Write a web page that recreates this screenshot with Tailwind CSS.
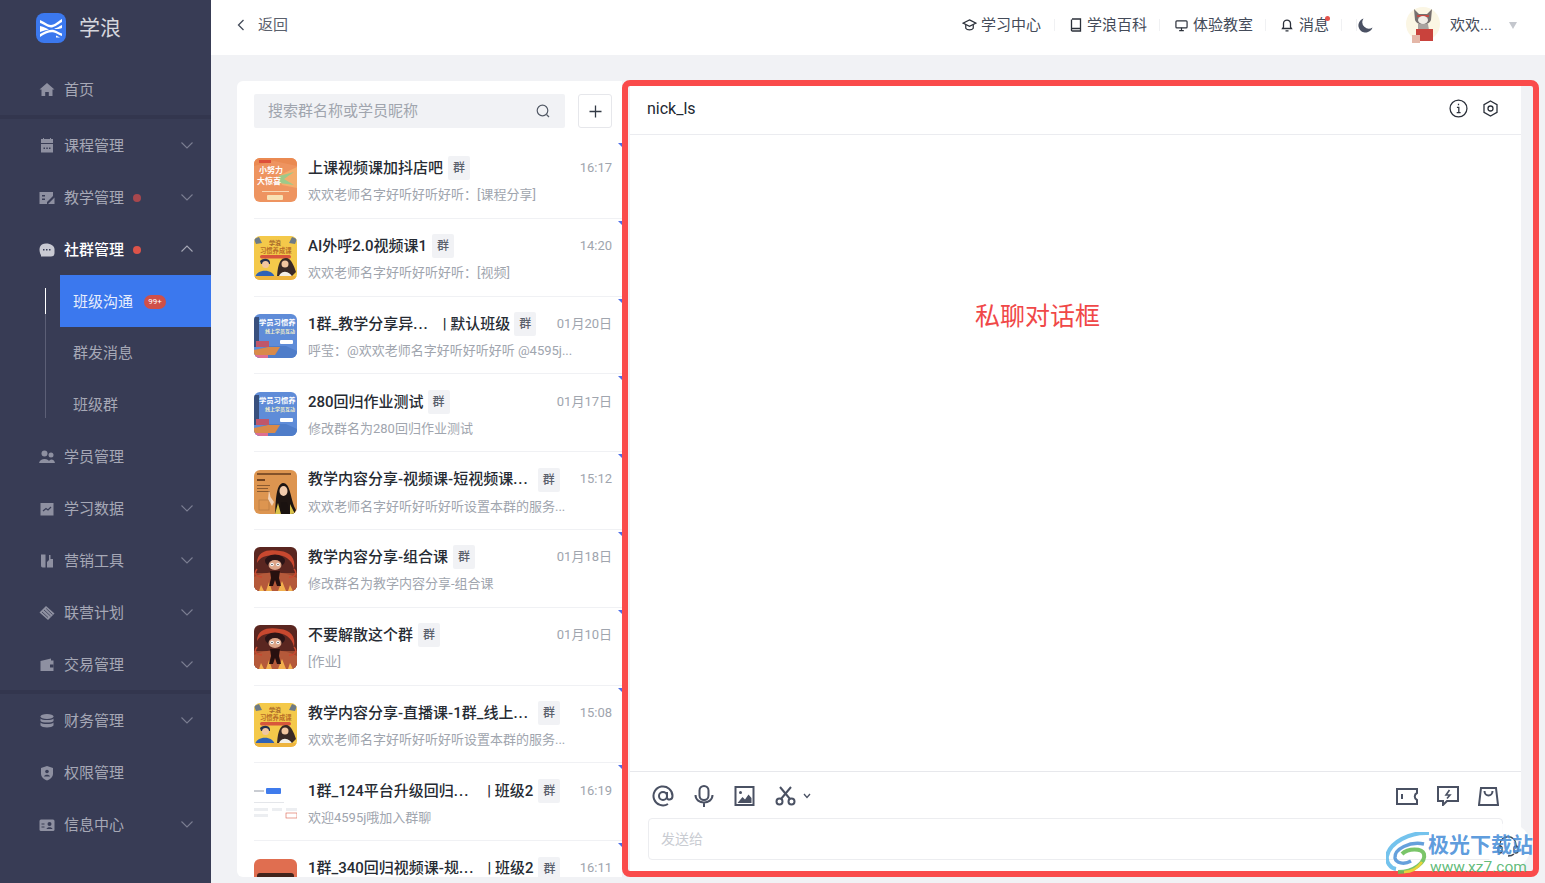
<!DOCTYPE html>
<html lang="zh-CN">

<head>
    <meta charset="UTF-8">
    <title>学浪</title>
    <script src="https://cdn.jsdelivr.net/npm/@tailwindcss/browser@4"></script>
</head>

<body class="h-[883px] w-[1545px] overflow-hidden bg-[#f1f2f5] font-['Roboto','Noto_Sans_CJK_SC',sans-serif]">

    <!-- avatar pictures, reused by several rows -->
    <svg class="hidden">
        <symbol id="av-orange" viewBox="0 0 43 44">
            <rect width="43" height="44" fill="#ee9460" />
            <path d="M0 0 H43 V8 L20 3 L0 8 Z" fill="#ea8a52" />
            <path d="M24 18 L43 9 V30 L28 27 Z" fill="#f4ad6c" />
            <path d="M25 18 L40 14 L30 21 L40 27 L25 25 Z" fill="#9dc98a" />
            <rect x="5" y="2" width="12" height="3" fill="#dd4f3a" />
            <text x="5" y="15" font-size="8" font-weight="700" fill="#fff">小努力</text>
            <text x="3" y="26" font-size="8" font-weight="700" fill="#fff">大惊喜</text>
            <rect x="8" y="33" width="27" height="1" fill="#f8d8b4" />
            <rect x="13" y="37" width="16" height="5" rx="1" fill="#f8e2b4" />
        </symbol>
        <symbol id="av-yellow" viewBox="0 0 43 44">
            <rect width="43" height="44" fill="#f4c94a" />
            <path d="M0 3 L5 1 L8 7 L2 8 Z M43 3 L38 1 L35 7 L41 8 Z" fill="#6d7a86" />
            <text x="15" y="9" font-size="6" font-weight="700" fill="#a8682a">学浪</text>
            <text x="6" y="17" font-size="6.300" font-weight="700" fill="#b86d28">习惯养成课</text>
            <rect x="6" y="19" width="31" height="3.500" rx="1.700" fill="#d8563c" />
            <path d="M6 25 C9 22 15 22 16 26 V28 H7 Z" fill="#26314e" />
            <circle cx="11.500" cy="28.500" r="3.500" fill="#f2c6a0" />
            <path d="M1 42 C2 33 19 32 21 42 Z" fill="#2f62b5" />
            <path d="M23 40 C24 26 27 22 32 22 C37 22 40 30 42 36 L38 40 Z" fill="#3a2a26" />
            <circle cx="31" cy="28" r="3.500" fill="#f2c6a0" />
            <path d="M24 44 C25 33 36 33 40 44 Z" fill="#f3efe6" />
            <rect y="40" width="43" height="4" fill="#eeb43e" />
        </symbol>
        <symbol id="av-blue" viewBox="0 0 43 44">
            <rect width="43" height="44" fill="#5f8cd8" />
            <text x="5" y="11" font-size="7.300" font-weight="700" fill="#fff">学员习惯养</text>
            <text x="11" y="19" font-size="5" font-weight="700" fill="#f5f0c8">线上学员互动</text>
            <rect x="26" y="26" width="13" height="4" rx="1" fill="#fff" />
            <path d="M0 3 H5 V33 H0 Z" fill="#38507e" />
            <path d="M0 37 L14 32 H32 L43 37 V44 H0 Z" fill="#4f7dc9" />
            <path d="M0 36 L14 33 H26 L21 41 H0 Z" fill="#d98a4a" />
            <rect x="2" y="27" width="13" height="6" fill="#c0566a" />
            <rect y="41" width="14" height="3" fill="#de6f92" />
        </symbol>
        <symbol id="av-woman" viewBox="0 0 43 44">
            <rect width="43" height="44" fill="#dd9550" />
            <rect x="3" y="3" width="34" height="2" fill="#84522a" />
            <rect x="3" y="9" width="8" height="2" fill="#70421f" />
            <rect x="3" y="15" width="13" height="1" fill="#8a5a30" />
            <rect x="3" y="18" width="11" height="1" fill="#8a5a30" />
            <rect x="3" y="21" width="13" height="1" fill="#8a5a30" />
            <rect x="5" y="30" width="10" height="10" fill="none" stroke="#b57a42" stroke-width=".7" />
            <path d="M15 20 L16.500 27 L20 32 L18 36 L14 29 Z" fill="#f3d3b8" />
            <path d="M21 44 C22 30 22 14 29 13 C37 13 36 30 42 40 L40 44 Z" fill="#1e1512" />
            <ellipse cx="29.500" cy="21" rx="4" ry="5" fill="#f2cbac" />
            <path d="M26 44 L27 32 L33 32 L36 44 Z" fill="#1a1210" />
            <path d="M21 44 L24 33 L27 44 Z M36 44 L36 34 L41 44 Z" fill="#d9c24a" />
        </symbol>
        <symbol id="av-fire" viewBox="0 0 43 44">
            <rect width="43" height="44" fill="#5a2620" />
            <rect y="26" width="43" height="18" fill="#9c4a30" />
            <path d="M0 30 C12 24 30 24 43 31 V44 H0 Z" fill="#b5593a" />
            <path d="M3 16 C3 3 16 2 26 4 C36 5 42 11 40 22 C38 12 30 8 22 8 C12 8 6 10 3 16 Z" fill="#c8482f" />
            <path d="M3 22 C-1 27 3 30 8 30 M40 22 C44 26 40 31 35 30" fill="none" stroke="#c8482f" stroke-width="1.500" />
            <path d="M12 44 L15 35 L18 44 Z M24 44 L28 34 L32 44 Z M5 44 L7 38 L10 44 Z M34 44 L36 38 L39 44 Z" fill="#f2b04e" />
            <ellipse cx="21" cy="14" rx="10" ry="6.500" fill="#2b1416" />
            <ellipse cx="21" cy="18" rx="6.500" ry="5" fill="#dca488" />
            <circle cx="18" cy="17.500" r="1.800" fill="#fff" />
            <circle cx="24" cy="17.500" r="1.800" fill="#fff" />
            <circle cx="18" cy="17.500" r=".7" fill="#222" />
            <circle cx="24" cy="17.500" r=".7" fill="#222" />
            <path d="M16 24 H26 L25 31 L27 39 H23 L21 33 L19 39 H15 L17 31 Z" fill="#27100f" />
        </symbol>
        <symbol id="av-shot" viewBox="0 0 43 44">
            <rect width="43" height="44" fill="#fff" />
            <rect x="0" y="9" width="10" height="2" fill="#c9ccd2" />
            <rect x="12" y="7" width="15" height="6" rx="1" fill="#3f7bec" />
            <rect x="0" y="21" width="30" height="1" fill="#e4e6ea" />
            <rect x="0" y="27" width="14" height="3" fill="#eceef1" />
            <rect x="18" y="27" width="10" height="3" fill="#eceef1" />
            <rect x="32" y="27" width="11" height="3" fill="#eceef1" />
            <rect x="0" y="33" width="14" height="3" fill="#eceef1" />
            <rect x="32" y="32" width="11" height="5" fill="#fff" stroke="#d9604c" stroke-width=".6" />
        </symbol>
        <symbol id="av-red" viewBox="0 0 43 44">
            <rect width="43" height="44" fill="#e06e50" />
            <rect x="3" y="14" width="37" height="10" rx="3" fill="#41241c" />
        </symbol>
    </svg>

    <div class="flex h-full">
        <!-- sidebar -->
        <nav id="side" class="flex w-[211px] shrink-0 flex-col bg-[#383c55] text-[15px] text-[#a6a8b6]">
            <div class="flex h-[63px] items-start pl-[36px] pt-[13px]">
                <div class="flex h-[30px] w-[30px] items-center justify-center rounded-lg bg-[#3b78ee]">
                    <svg class="h-[22px] w-[24px]" viewBox="0 0 24 22" fill="#fff">
                        <path d="M1 3 L5 5 C8 7 10 8 12 8 C15 8 18 5 23 2 V5 C18 8 15 10.500 12 10.500 C9 10.500 5 7.500 1 6 Z" />
                        <path d="M1 9 C5 10 8 11.500 10 12.500 C7 13 4 14 1 15 Z" />
                        <path d="M1 17 C7 13.500 12 12 15 13 C18 14 20 15.500 23 16.500 V19 C20 18 18 16.500 15 15.500 C11 14.500 6 16.500 1 20 Z" />
                        <path d="M23 8 V11 C20 12 18 12.500 15 11.500 C18 11 20 9.500 23 8 Z" />
                        <path d="M17 18.500 L21 20.500 H17 Z" />
                    </svg>
                </div>
                <span class="ml-[13px] text-[21px] leading-[30px] text-[#d5d6dd]">学浪</span>
            </div>
        </nav>

        <div class="flex min-w-0 flex-1 flex-col">
            <!-- top bar -->
            <header class="flex h-[55px] items-center bg-white pb-[5px] pl-[26px] text-[15px] text-[#444b59]">
                <svg class="h-3 w-2" viewBox="0 0 8 12" fill="none" stroke="#444b59" stroke-width="1.300">
                    <path d="M6.500 1 L1.500 6 L6.500 11" />
                </svg>
                <span class="ml-[13px] text-[#5a606c]">返回</span>

                <div class="ml-auto flex items-center">
                    <svg class="h-[14px] w-[15px]" viewBox="0 0 16 14" fill="none" stroke="#2b303a" stroke-width="1.300">
                        <path d="M8 1.500 L15 5 L8 8.500 L1 5 Z" />
                        <path d="M4 7 V10.500 C5.500 12.800 10.500 12.800 12 10.500 V7" />
                    </svg>
                    <span class="ml-[4px]">学习中心</span>
                    <i class="ml-[13px] h-3 w-px bg-[#f0f1f3]"></i>
                    <svg class="ml-[15px] h-[14px] w-[12px]" viewBox="0 0 12 14" fill="none" stroke="#2b303a" stroke-width="1.300">
                        <path d="M2 1 H10.500 V13 H2.500 C1 13 1 10.500 2.500 10.500 H10.500 M1.500 11.500 V1.500" />
                    </svg>
                    <span class="ml-[5px]">学浪百科</span>
                    <i class="ml-[12px] h-3 w-px bg-[#f0f1f3]"></i>
                    <svg class="ml-[15px] h-[13px] w-[13px]" viewBox="0 0 14 14" fill="none" stroke="#2b303a" stroke-width="1.300">
                        <rect x="1" y="2" width="12" height="7.500" rx="1" />
                        <path d="M4.500 12.500 H9.500 M7 9.500 V12.500" />
                    </svg>
                    <span class="ml-[5px]">体验教室</span>
                    <i class="ml-[12px] h-3 w-px bg-[#f0f1f3]"></i>
                    <svg class="ml-[15px] h-[14px] w-[12px]" viewBox="0 0 12 14" fill="none" stroke="#2b303a" stroke-width="1.300">
                        <path d="M1.500 10.500 H10.500 L9.500 9 V5.500 C9.500 1 2.500 1 2.500 5.500 V9 Z M4.500 12.800 H7.500" />
                    </svg>
                    <span class="relative ml-[6px]">消息<i class="absolute right-[-1px] top-[2px] h-[5px] w-[5px] rounded-full bg-[#e5534b]"></i></span>
                    <i class="ml-[12px] h-3 w-px bg-[#f0f1f3]"></i>
                    <i class="ml-[14px] h-3 w-px bg-[#f0f1f3]"></i>
                    <svg class="ml-[1px] h-[15px] w-[15px]" viewBox="0 0 15 15" fill="#4a5163">
                        <path d="M5.500 .5 A7.200 7.200 0 1 0 14.500 9.500 A6.500 6.500 0 0 1 5.500 .5 Z" />
                    </svg>
                    <svg class="ml-[33px] h-[38px] w-[34px]" viewBox="0 0 34 38">
                        <circle cx="17" cy="18" r="17" fill="#fbf6e4" />
                        <path d="M8 3 L13 8 H21 L26 3 L25 14 C23 20 11 20 9 14 Z" fill="#77706f" />
                        <path d="M11 9 H23 V11 H11 Z" fill="#c24b45" />
                        <ellipse cx="17" cy="14" rx="5" ry="4" fill="#f1ece6" />
                        <path d="M12 18 H22 L23 24 H12 Z" fill="#a9a3a0" />
                        <rect x="10" y="23" width="17" height="12" fill="#c9423c" />
                        <rect x="6" y="29" width="8" height="8" fill="#e4b7a8" />
                    </svg>
                    <span class="ml-[10px] w-[46px] whitespace-nowrap">欢欢...</span>
                    <i class="ml-[13px] h-0 w-0 border-x-[4.500px] border-t-[7px] border-x-transparent border-t-[#c4c7cd]"></i>
                    <i class="w-[28px]"></i>
                </div>
            </header>

            <main class="flex items-start pl-[26px] pt-[25px]">
                <!-- conversation list -->
                <section class="mt-[1px] h-[796px] w-[385px] shrink-0 overflow-hidden rounded-l-md bg-white">
                    <div class="flex h-[60px] items-start pl-[17px] pt-[13px]">
                        <div class="flex h-[34px] w-[311px] items-center justify-between rounded-[2px] bg-[#f1f2f5] pl-[14px] pr-[15px] text-[15px] text-[#a0a5ae]">
                            搜索群名称或学员昵称
                            <svg class="h-[14px] w-[14px]" viewBox="0 0 14 14" fill="none" stroke="#555c68" stroke-width="1.200">
                                <circle cx="6.500" cy="6.500" r="5.300" />
                                <path d="M10.500 10.500 L13 13" />
                            </svg>
                        </div>
                        <div class="ml-[13px] flex h-[34px] w-[34px] items-center justify-center rounded-[3px] border border-[#e6e7eb]">
                            <svg class="h-[13px] w-[13px]" viewBox="0 0 13 13" stroke="#333a45" stroke-width="1.300">
                                <path d="M6.500 .5 V12.500 M.5 6.500 H12.500" />
                            </svg>
                        </div>
                    </div>
                    <div id="rows"></div>
                </section>

                <!-- private chat, marked with a red frame -->
                <section class="h-[797px] w-[917px] shrink-0 rounded-lg border-[6px] border-[#fa4b4b] bg-[#f1f2f5] pl-[2px] pr-[12px]">
                    <div class="flex h-full flex-col bg-white">
                        <div class="flex h-[49px] shrink-0 items-center border-b border-[#ebecf0] pb-[3px] pl-[17px] pr-[23px] text-[16px] text-[#222831]">
                            nick_ls
                            <svg class="ml-auto h-[19px] w-[19px]" viewBox="0 0 18 18" fill="none" stroke="#2b303a" stroke-width="1.200">
                                <circle cx="9" cy="9" r="8" />
                                <path d="M7.500 8 H9.300 V13 M7.300 13 H11 M9 4.500 V6" />
                            </svg>
                            <svg class="ml-[15px] h-[17px] w-[15px]" viewBox="0 0 15 17" fill="none" stroke="#2b303a" stroke-width="1.300">
                                <path d="M7.500 1 L14 4.700 V12.300 L7.500 16 L1 12.300 V4.700 Z" />
                                <circle cx="7.500" cy="8.500" r="2.500" />
                            </svg>
                        </div>

                        <div class="flex-1 pl-[345px] pt-[165px]">
                            <span class="text-[25px] leading-[34px] text-[#f04848]">私聊对话框</span>
                        </div>

                        <div class="shrink-0 border-t border-[#e7e8ec] px-[18px] pt-[12px]">
                            <div class="flex h-[24px] items-center pl-[4px] pr-[4px]">
                                <svg class="h-[22px] w-[22px]" viewBox="0 0 22 22" fill="none" stroke="#4a5163" stroke-width="2">
                                    <circle cx="11" cy="11" r="4" />
                                    <path d="M15 7 V12.500 C15 15.500 20.500 15.500 20.500 11 A9.500 9.500 0 1 0 16 19" />
                                </svg>
                                <svg class="ml-[20px] h-[22px] w-[20px]" viewBox="0 0 20 22" fill="none" stroke="#4a5163" stroke-width="2">
                                    <rect x="5.500" y="1" width="9" height="14" rx="4.500" />
                                    <path d="M1.500 10 C1.500 20 18.500 20 18.500 10 M10 18 V22" />
                                </svg>
                                <svg class="ml-[20px] h-[20px] w-[21px]" viewBox="0 0 20 20" fill="none" stroke="#4a5163" stroke-width="2">
                                    <rect x="1" y="1" width="18" height="18" />
                                    <circle cx="6" cy="6.500" r="1.500" fill="#4a5163" stroke="none" />
                                    <path d="M3 17 L8 11 L10.500 13.500 L14 8.500 L17 12 V17 Z" fill="#4a5163" stroke="none" />
                                </svg>
                                <svg class="ml-[20px] h-[20px] w-[21px]" viewBox="0 0 21 20" fill="none" stroke="#4a5163" stroke-width="2">
                                    <circle cx="4.500" cy="15.500" r="3" />
                                    <circle cx="16.500" cy="15.500" r="3" />
                                    <path d="M6 13 L16 1 M15 13 L5 1" />
                                </svg>
                                <svg class="ml-[7px] h-[6px] w-[8px]" viewBox="0 0 8 6" fill="none" stroke="#4a5163" stroke-width="1.300">
                                    <path d="M1 1 L4 4.500 L7 1" />
                                </svg>
                                <svg class="ml-auto h-[17px] w-[22px]" viewBox="0 0 22 17" fill="none" stroke="#4a5163" stroke-width="2">
                                    <path d="M1 1 H21 V5 C18 6.500 18 10.500 21 12 V16 H1 Z M6 6 V11" />
                                </svg>
                                <svg class="ml-[19px] h-[20px] w-[22px]" viewBox="0 0 22 20" fill="none" stroke="#4a5163" stroke-width="2">
                                    <path d="M1 1 H21 V15 H10 L6 19 V15 H1 Z" />
                                    <path d="M12.500 4 L9 9 H13 L10 12.500" stroke-width="1.600" />
                                </svg>
                                <svg class="ml-[19px] h-[19px] w-[21px]" viewBox="0 0 21 19" fill="none" stroke="#4a5163" stroke-width="2">
                                    <path d="M3 1 H18 L20 18 H1 Z M6.500 4 C6.500 10 14.500 10 14.500 4" />
                                </svg>
                            </div>
                            <div class="mt-[10px] flex h-[42px] items-center rounded-[4px] border border-[#ecedf0] pl-[12px] text-[14px] text-[#c9ccd2]">发送给</div>
                            <div class="h-[11px]"></div>
                        </div>
                    </div>
                </section>
            </main>
        </div>
    </div>

    <!-- floating help button -->
    <div class="absolute left-[1485px] top-[823px] flex h-[46px] w-[46px] items-center justify-center rounded-full bg-white/90">
        <svg class="h-[22px] w-[22px]" viewBox="0 0 22 22" fill="none" stroke="#3d4450" stroke-width="1.300">
            <path d="M3 13 V10 C3 -1 19 -1 19 10 V13 M17 19 C15 21 13 21 11 21" />
            <rect x="1" y="11" width="4" height="7" rx="2" />
            <rect x="17" y="11" width="4" height="7" rx="2" />
        </svg>
    </div>

    <!-- site watermark -->
    <div class="absolute left-[1386px] top-[832px] flex h-[42px] items-start">
        <svg class="h-[42px] w-[44px]" viewBox="0 0 44 42" fill="none">
            <path d="M43 1 C24 0 4 10 1 24 C0 30 4 36 10 37" stroke="#5cb8ea" stroke-width="4" opacity=".85" />
            <path d="M38 12 C24 9 8 17 9 26 C10 31 18 33 25 29" stroke="#4a8fd6" stroke-width="3.500" opacity=".85" />
            <path d="M16 22 C22 16 36 16 38 22 C40 30 28 40 12 40" stroke="#6bbf59" stroke-width="4" opacity=".9" />
            <path d="M18 40 C26 40 32 36 36 30" stroke="#e8d43c" stroke-width="2.500" />
        </svg>
        <div class="ml-[-2px]">
            <div class="text-[21px] font-bold leading-[26px] text-[#4a90d9]/90">极光下载站</div>
            <div class="ml-[2px] text-[15.500px] leading-[18px] text-[#4fb36a]/90">www.xz7.com</div>
        </div>
    </div>

    <script>
        const chevDown = `<svg class="mb-[2px] ml-auto h-[7px] w-[12px]" viewBox="0 0 12 7" fill="none" stroke="#7b7e92" stroke-width="1.100"><path d="M.5 .5 L6 6 L11.500 .5"/></svg>`;
        const chevUp = `<svg class="mb-[4px] ml-auto h-[7px] w-[12px]" viewBox="0 0 12 7" fill="none" stroke="#a6a8b6" stroke-width="1.100"><path d="M.5 6.500 L6 1 L11.500 6.500"/></svg>`;

        const icons = {
            home: '<path d="M8 1 L15.500 7.500 H13.500 V14 H9.800 V10 H6.200 V14 H2.500 V7.500 H.5 Z"/>',
            calendar: '<path d="M2 1 H14 V5 H2 Z M2 6 H14 V14.500 H2 Z M4 1 V0 H5 V1 Z M11 1 V0 H12 V1 Z"/><path d="M4.500 9.500 H6 V11 H4.500 Z M7.300 9.500 H8.800 V11 H7.300 Z M10 9.500 H11.500 V11 H10 Z" fill="#383c55"/>',
            teach: '<path d="M.5 2 H14 V6 L8 12 V14 H.5 Z M9 14 L15.500 7.500 V14 Z"/><path d="M3 5 H6 V6.500 H3 Z M3 8.500 H6 V10 H3 Z" fill="#383c55"/>',
            chat: '<path d="M7 1.500 C1 1.500 .5 6 .5 8 C.5 11 2 13 2 13 V14.500 H12 C14 14.500 15.500 13.500 15.500 11 V7 C15.500 4 12 1.500 7 1.500 Z"/><path d="M4 7 H5.500 V8.500 H4 Z M7 7 H8.500 V8.500 H7 Z M10 7 H11.500 V8.500 H10 Z" fill="#383c55"/>',
            people: '<circle cx="5.500" cy="4.500" r="3"/><path d="M0 14 C1 8.500 10 8.500 11 14 Z"/><circle cx="12" cy="6" r="2.500"/><path d="M9 14 C10 10 14.500 9 16 14 Z"/>',
            chart: '<path d="M1.500 2 H14.500 V14.500 H1.500 Z"/><path d="M4 10 L7 7.500 L9 9 L12 6" fill="none" stroke="#383c55" stroke-width="1.200"/>',
            tool: '<path d="M2 1.500 H6.500 V14.500 H4 C2 14.500 2 13 2 12 Z M8 14.500 V9 L10 7 V2 H11.500 V6 H14 V14.500 Z"/>',
            hands: '<path d="M7 1 L15.500 8.500 L9 15 L.5 7.500 Z"/><path d="M5 5 L11.500 11 M7.200 3.500 L13.500 9.500 M3 7 L9 12.500" stroke="#383c55" stroke-width=".8" fill="none"/>',
            wallet: '<path d="M1.500 4 L12 1.500 V3.500 H14.500 V14 H1.500 Z"/><path d="M11 7.500 H14.500 V10.500 H11 Z" fill="#383c55"/>',
            coins: '<ellipse cx="8" cy="3.500" rx="6.500" ry="2.500"/><path d="M1.500 5.500 C3 7.500 13 7.500 14.500 5.500 V8 C13 10 3 10 1.500 8 Z M1.500 9.500 C3 11.500 13 11.500 14.500 9.500 V12.500 C13 15 3 15 1.500 12.500 Z"/>',
            shield: '<path d="M8 1 L14 3 V8.500 C14 12 11 14.500 8 15.500 C5 14.500 2 12 2 8.500 V3 Z"/><circle cx="8" cy="6.500" r="1.800" fill="#383c55"/><path d="M5 11.500 C5.500 9 10.500 9 11 11.500 Z" fill="#383c55"/>',
            card: '<rect x=".5" y="2.500" width="15" height="11.500" rx="1.500"/><circle cx="10.500" cy="7" r="2" fill="#383c55"/><path d="M7.500 12 C8 9.500 13 9.500 13.500 12 Z M2.500 6.500 H5.500 V7.500 H2.500 Z M2.500 9.500 H5.500 V10.500 H2.500 Z" fill="#383c55"/>',
        };

        const menu = [
            { icon: 'home', name: '首页' },
            { line: true },
            { icon: 'calendar', name: '课程管理', arrow: true },
            { icon: 'teach', name: '教学管理', arrow: true, dot: 'bg-[#a8474d]' },
            { icon: 'chat', name: '社群管理', open: true, dot: 'bg-[#dd5349]' },
            { sub: true },
            { icon: 'people', name: '学员管理' },
            { icon: 'chart', name: '学习数据', arrow: true },
            { icon: 'tool', name: '营销工具', arrow: true },
            { icon: 'hands', name: '联营计划', arrow: true },
            { icon: 'wallet', name: '交易管理', arrow: true },
            { line: true },
            { icon: 'coins', name: '财务管理', arrow: true },
            { icon: 'shield', name: '权限管理' },
            { icon: 'card', name: '信息中心', arrow: true },
        ];

        const subMenu = `<div class="relative">
            <i class="absolute left-[45px] top-[13px] h-[130px] w-px bg-[#5c5f76]"></i>
            <i class="absolute left-[45px] top-[13px] h-[26px] w-px bg-white"></i>
            <div class="ml-[60px] flex h-[52px] items-center bg-[#3b78ee] pl-[13px] pt-[2px] text-[#e8eefc]">班级沟通
                <span class="ml-[11px] flex h-[14px] w-[22px] items-center justify-center rounded-full bg-[#cf5049] text-[8px] text-white">99+</span>
            </div>
            <div class="ml-[60px] flex h-[52px] items-center pl-[13px]">群发消息</div>
            <div class="ml-[60px] flex h-[51px] items-center pl-[13px] pt-[2px]">班级群</div>
        </div>`;

        document.getElementById('side').insertAdjacentHTML('beforeend', menu.map(item => {
            if (item.line) return `<div class="h-1 bg-[#33364e]"></div>`;
            if (item.sub) return subMenu;
            const text = item.open ? 'font-medium text-white' : '';
            const fill = item.open ? '#c9cad3' : '#8e90a1';
            return `<div class="flex h-[52px] items-center pl-[39px] pr-[18px] pt-[2px]">
                <svg class="h-[16px] w-[16px]" viewBox="0 0 16 16" fill="${fill}">${icons[item.icon]}</svg>
                <span class="ml-[9px] ${text}">${item.name}</span>
                ${item.dot ? `<i class="ml-[9px] h-[8px] w-[8px] rounded-full ${item.dot}"></i>` : ''}
                ${item.arrow ? chevDown : ''}${item.open ? chevUp : ''}
            </div>`;
        }).join(''));

        // dots of a cut-off title sit wider in the reference
        const dots = '<span class="tracking-[1px]">...</span>';

        const rows = [
            { av: 'av-orange', title: '上课视频课加抖店吧', tag: 'ml-[5px]', time: '16:17', sub: '欢欢老师名字好听好听好听：[课程分享]' },
            { av: 'av-yellow', title: 'AI外呼2.0视频课1', tag: 'ml-[5px]', time: '14:20', sub: '欢欢老师名字好听好听好听：[视频]' },
            { av: 'av-blue', title: `1群_教学分享异${dots}`, cls: '| 默认班级', gap: 'ml-[14px]', tag: 'ml-[4px]', time: '01月20日', sub: '呼莹：@欢欢老师名字好听好听好听 @4595j...' },
            { av: 'av-blue', title: '280回归作业测试', tag: 'ml-[4px]', time: '01月17日', sub: '修改群名为280回归作业测试' },
            { av: 'av-woman', title: `教学内容分享-视频课-短视频课${dots}`, tag: 'ml-[9px]', time: '15:12', sub: '欢欢老师名字好听好听好听设置本群的服务...' },
            { av: 'av-fire', title: '教学内容分享-组合课', tag: 'ml-[5px]', time: '01月18日', sub: '修改群名为教学内容分享-组合课' },
            { av: 'av-fire', title: '不要解散这个群', tag: 'ml-[5px]', time: '01月10日', sub: '[作业]' },
            { av: 'av-yellow', title: `教学内容分享-直播课-1群_线上${dots}`, tag: 'ml-[9px]', time: '15:08', sub: '欢欢老师名字好听好听好听设置本群的服务...' },
            { av: 'av-shot', title: `1群_124平台升级回归${dots}`, cls: '| 班级2', gap: 'ml-[18px]', tag: 'ml-[5px]', time: '16:19', sub: '欢迎4595j哦加入群聊' },
            { av: 'av-red', title: `1群_340回归视频课-规${dots}`, cls: '| 班级2', gap: 'ml-[13px]', tag: 'ml-[5px]', time: '16:11', sub: '&nbsp;' },
        ];

        document.getElementById('rows').innerHTML = rows.map(row => `
            <div class="relative ml-[17px] flex h-[77.800px] items-center border-b border-[#f0f1f4] pr-[10px]">
                <i class="absolute right-0 top-[2px] h-0 w-0 border-l-[4px] border-t-[4px] border-l-transparent border-t-[#4f6fe8]"></i>
                <svg class="mt-[2px] h-[44px] w-[43px] shrink-0 rounded-md"><use href="#${row.av}"/></svg>
                <div class="ml-[11px] min-w-0 flex-1 pt-[3px]">
                    <div class="flex h-[24px] items-center text-[15px] font-medium text-[#262b33]">
                        <span class="whitespace-nowrap">${row.title}</span>
                        ${row.cls ? `<span class="${row.gap} whitespace-nowrap">${row.cls}</span>` : ''}
                        <span class="${row.tag} flex h-[24px] w-[22px] shrink-0 items-center justify-center rounded-[2px] bg-[#f1f2f5] text-[12px] text-[#5a606c]">群</span>
                        <span class="mb-[1px] ml-auto whitespace-nowrap text-[13px] font-normal text-[#a0a5ae]">${row.time}</span>
                    </div>
                    <div class="mt-[5px] whitespace-nowrap text-[13px] leading-[20px] text-[#a0a5ae]">${row.sub}</div>
                </div>
            </div>`).join('');
    </script>
</body>

</html>
